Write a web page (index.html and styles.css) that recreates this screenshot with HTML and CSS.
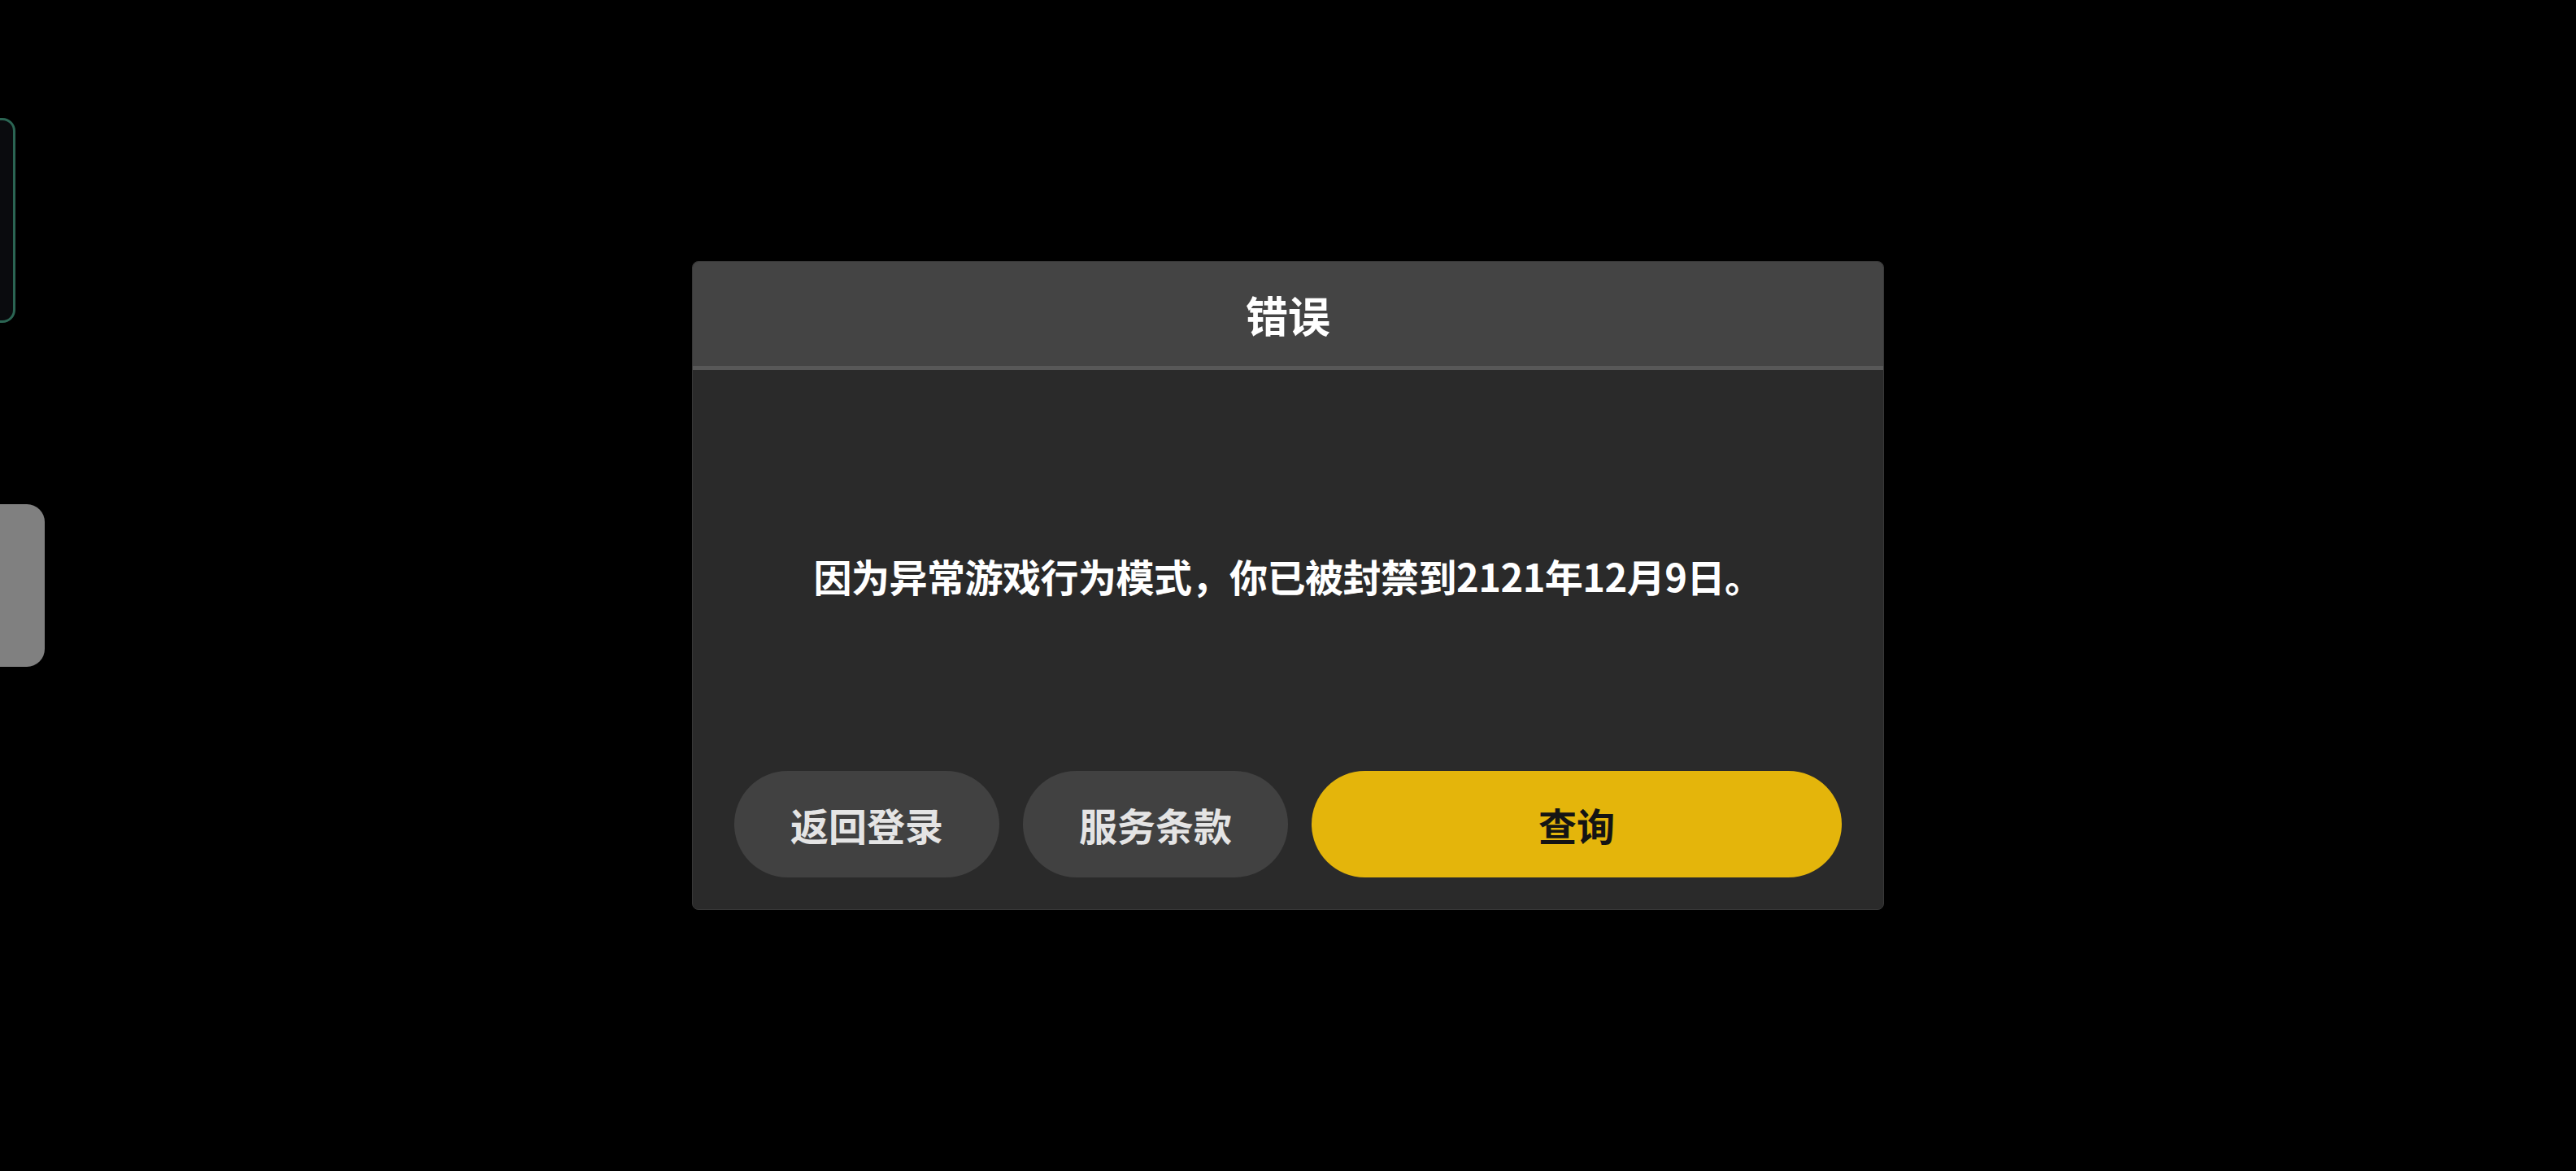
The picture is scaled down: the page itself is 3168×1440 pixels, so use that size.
FILE: index.html
```html
<!DOCTYPE html>
<html lang="zh-CN">
<head>
    <meta charset="UTF-8">
    <meta name="viewport" content="width=device-width, initial-scale=1.0">
    <title>错误</title>
    <link rel="stylesheet" href="styles.css">
</head>
<body>
    <!-- floating edge widgets left over from the game HUD -->
    <div class="edge-panel"></div>
    <div class="edge-handle"></div>

    <div class="dialog">
        <div class="dialog-header">错误</div>
        <div class="dialog-body">
            <p class="dialog-message">因为异常游戏行为模式，你已被封禁到2121年12月9日。</p>
            <div class="dialog-actions">
                <button class="btn btn-secondary">返回登录</button>
                <button class="btn btn-secondary">服务条款</button>
                <button class="btn btn-primary">查询</button>
            </div>
        </div>
    </div>
</body>
</html>
```

FILE: styles.css
```css
* {
    margin: 0;
    padding: 0;
    box-sizing: border-box;
}

body {
    font-family: "Noto Sans CJK SC", "Noto Sans", sans-serif;
    background: #000;
    min-height: 100vh;
    display: flex;
    align-items: center;
    justify-content: center;
    overflow: hidden;
}

/* HUD bits pinned to the left screen edge */
.edge-panel {
    position: absolute;
    left: -30px;
    top: 145px;
    width: 49px;
    height: 252px;
    border: 3px solid #2b6553;
    border-radius: 16px;
    background: #0a0b0e;
}

.edge-handle {
    position: absolute;
    left: -30px;
    top: 620px;
    width: 85px;
    height: 200px;
    border-radius: 22px;
    background: #808080;
}

.dialog {
    width: 1466px;
    height: 798px;
    display: flex;
    flex-direction: column;
    background: #2a2a2a;
    border: 1px solid #383838;
    border-radius: 8px;
    overflow: hidden;
}

.dialog-header {
    height: 133px;
    flex-shrink: 0;
    display: flex;
    align-items: center;
    justify-content: center;
    background: #444;
    border-bottom: 5px solid #585858;
    color: #fff;
    font-size: 52px;
    font-weight: 700;
}

.dialog-body {
    flex: 1;
    display: flex;
    flex-direction: column;
    padding: 0 51px 39px;
}

.dialog-message {
    flex: 1;
    display: flex;
    align-items: center;
    justify-content: center;
    padding-top: 12px;
    color: #fff;
    font-size: 47px;
    font-weight: 700;
    letter-spacing: -0.5px;
}

.dialog-actions {
    display: grid;
    grid-template-columns: 1fr 1fr 2fr;
    gap: 29px;
}

.btn {
    height: 131px;
    border: none;
    border-radius: 66px;
    font-family: inherit;
    font-size: 47px;
    font-weight: 700;
    cursor: pointer;
}

.btn-secondary {
    background: #414141;
    color: #e4e4e4;
}

.btn-primary {
    background: #e4b50b;
    color: #141414;
}
```
